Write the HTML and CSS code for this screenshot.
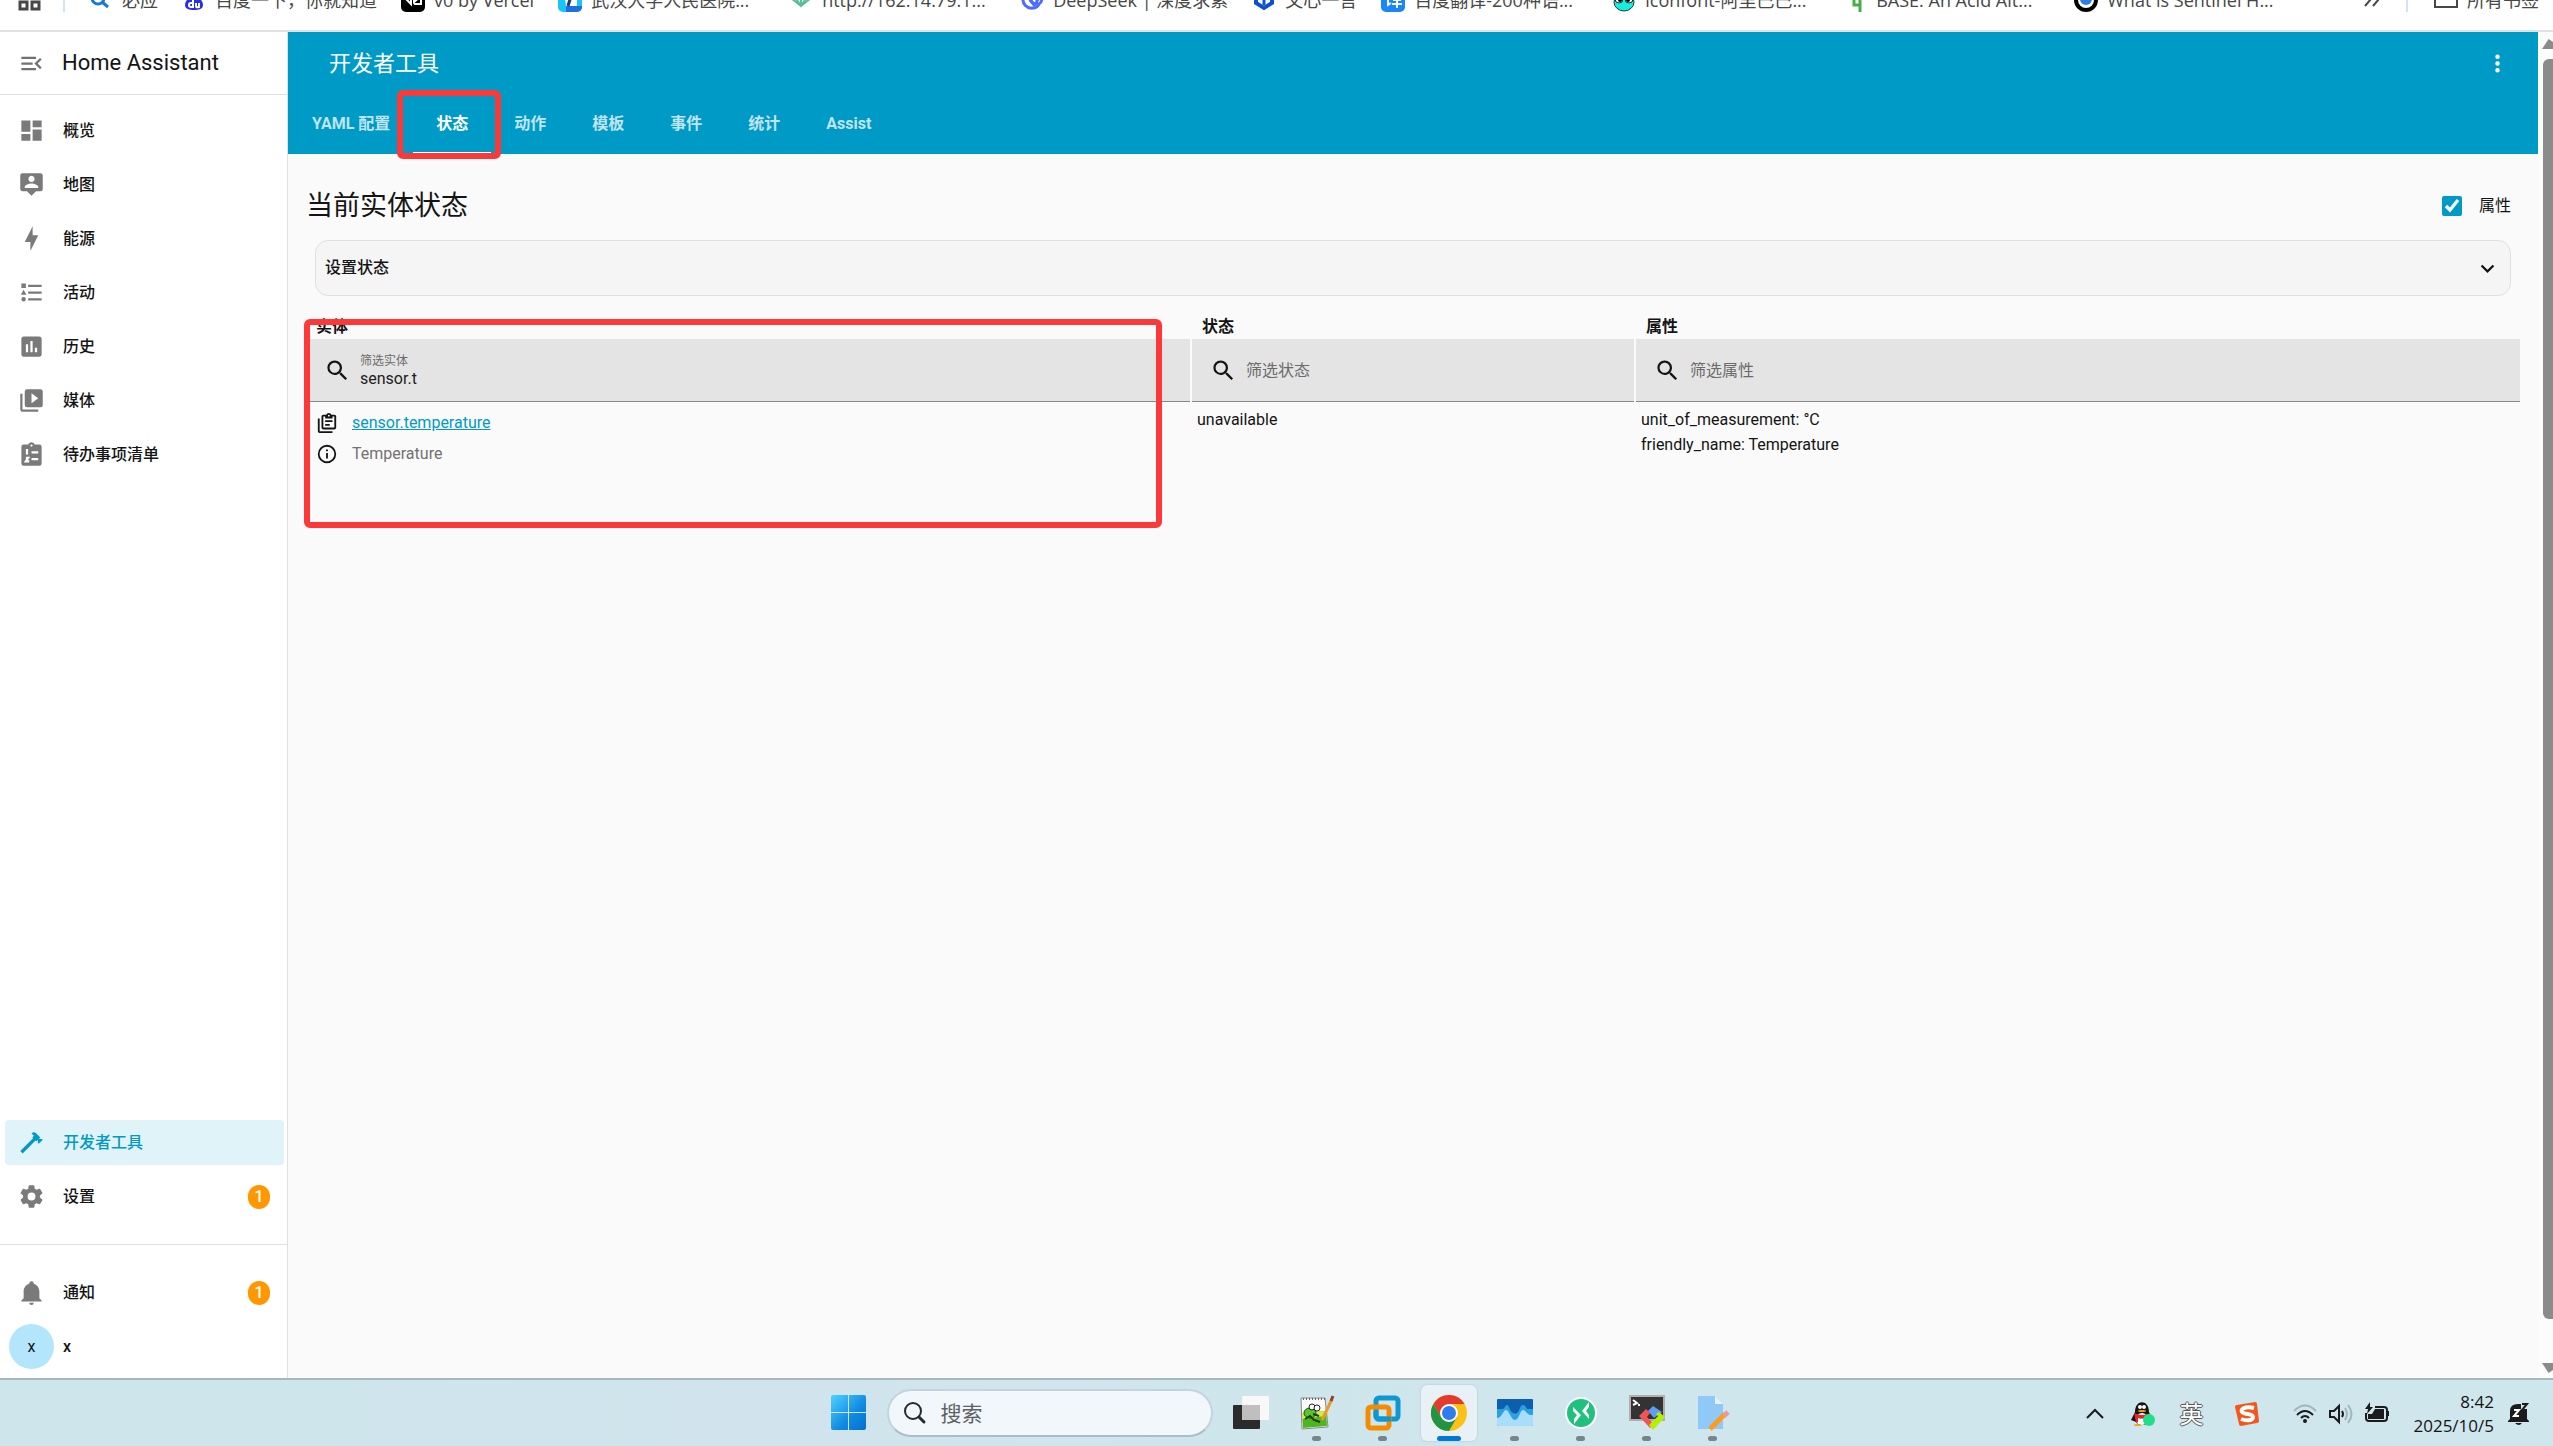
FILE: index.html
```html
<!DOCTYPE html>
<html lang="zh-CN">
<head>
  <meta charset="UTF-8">
  <meta name="viewport" content="width=device-width, initial-scale=1.0">
  <title>开发者工具 - Home Assistant</title>
  <link rel="stylesheet" href="styles.css">
</head>
<body>
  <!-- Bookmarks bar -->
  <nav class="bookmarks">
    <button class="bm-apps" aria-label="Apps">
      <svg viewBox="0 0 24 24"><path d="M2 2h7v7H2zM14 2h7v7h-7zM2 14h7v7H2zM14 14h7v7h-7z" fill="none" stroke="#474747" stroke-width="3"/></svg>
    </button>
    <span class="bm-sep"></span>
    <a class="bm" href="#"><svg viewBox="0 0 24 24"><circle cx="9" cy="10" r="6" fill="none" stroke="#1a78d0" stroke-width="3"/><path d="M13 14l6 5" stroke="#1a78d0" stroke-width="3"/></svg><span>必应</span></a>
    <a class="bm" href="#"><svg viewBox="0 0 24 24"><circle cx="12" cy="5" r="3" fill="#2932e1"/><path d="M12 7c4 0 9 6 9 10s-4 5-9 5-9-1-9-5 5-10 9-10z" fill="#2932e1"/><path d="M11 12v7H9a2 2 0 0 1 0-4h2M14 15v3q0 2 3 1v-4" fill="none" stroke="#fff" stroke-width="2"/></svg><span>百度一下，你就知道</span></a>
    <a class="bm" href="#"><svg viewBox="0 0 24 24"><rect width="24" height="24" rx="5"/><path d="M4 10l6 6V9M13 16h7V9h-7v5l6-5" fill="none" stroke="#fff" stroke-width="2"/></svg><span>v0 by Vercel</span></a>
    <a class="bm long" href="#"><svg viewBox="0 0 24 24"><rect width="24" height="24" rx="5" fill="#17c5f7"/><path d="M8 18h16v1a5 5 0 0 1-5 5H8z" fill="#1f6fe0"/><path d="M6 3h13v15H8z" fill="#fff"/><path d="M14 5l-4 13" stroke="#153b80" stroke-width="3"/></svg><span>武汉大学人民医院...</span></a>
    <a class="bm long" href="#"><svg viewBox="0 0 24 24"><path d="M2 10l10 8 10-8M6 9l6 9 6-9M12 6v12M2 10h20" fill="none" stroke="#58bd9b" stroke-width="2"/></svg><span>http://162.14.79.1...</span></a>
    <a class="bm" href="#"><svg viewBox="0 0 24 24"><path d="M3 9c-1 7 4 12 10 11 3 0 5-2 6-4 2-1 3-4 3-7l-5 3c0 4-2 5-5 2l-4-5" fill="none" stroke="#4d6bfe" stroke-width="3"/><path d="M10 12l5 6" stroke="#4d6bfe" stroke-width="3"/></svg><span>DeepSeek | 深度求索</span></a>
    <a class="bm" href="#"><svg viewBox="0 0 24 24"><path d="M4 6v9l8 5 8-5V6" fill="none" stroke="#0b51d0" stroke-width="4"/><path d="M12 7v10" stroke="#0b51d0" stroke-width="3"/></svg><span>文心一言</span></a>
    <a class="bm long" href="#"><svg viewBox="0 0 24 24"><rect width="24" height="24" rx="5" fill="#1787fb"/><path d="M5 8h2v9l3-2M12 12h8M11 16h10M16 8v12" fill="none" stroke="#fff" stroke-width="2"/></svg><span>百度翻译-200种语...</span></a>
    <a class="bm long" href="#"><svg viewBox="0 0 24 24"><ellipse cx="12" cy="14" rx="10" ry="9" fill="#10f0dc" stroke="#333"/><circle cx="7" cy="11" r="4" fill="#fff" stroke="#222"/><circle cx="17" cy="11" r="4" fill="#fff" stroke="#222"/><circle cx="8" cy="12" r="2"/><circle cx="16" cy="12" r="2"/></svg><span>iconfont-阿里巴巴...</span></a>
    <a class="bm long" href="#"><svg viewBox="0 0 24 24"><path d="M17 8v16M17 10h-6v7h6" fill="none" stroke="#48ae49" stroke-width="3"/></svg><span>BASE: An Acid Alt...</span></a>
    <a class="bm long" href="#"><svg viewBox="0 0 24 24"><circle cx="12" cy="12" r="12"/><circle cx="12" cy="12" r="8" fill="#fff"/><circle cx="12" cy="11" r="6" fill="#2f7de8"/></svg><span>What is Sentinel H...</span></a>
    <button class="bm-more" aria-label="More"><svg viewBox="0 0 24 24"><path d="M5 4l5 7-6 7M13 4l5 7-6 7" fill="none" stroke="#474747" stroke-width="2"/></svg></button>
    <span class="bm-sep"></span>
    <a class="bm all" href="#"><svg viewBox="0 0 24 24"><path d="M1 4h8l3 3h11v12H1z" fill="none" stroke="#474747" stroke-width="2"/></svg><span>所有书签</span></a>
  </nav>

  <div class="app">
    <!-- Sidebar -->
    <aside class="sidebar">
      <div class="side-head">
        <button class="icon-btn" aria-label="Menu"><svg class="icon" viewBox="0 0 24 24"><path d="M21,15.61L19.59,17L14.58,12L19.59,7L21,8.39L17.44,12L21,15.61M3,6H16V8H3V6M3,13V11H13V13H3M3,18V16H16V18H3Z"/></svg></button>
        <span class="side-title">Home Assistant</span>
      </div>
      <nav class="side-list">
        <a class="item" href="#"><svg class="icon" viewBox="0 0 24 24"><path d="M13,3V9H21V3M13,21H21V11H13M3,21H11V15H3M3,13H11V3H3V13Z"/></svg>概览</a>
        <a class="item" href="#"><svg class="icon" viewBox="0 0 24 24"><path d="M20,2H4A2,2 0 0,0 2,4V16A2,2 0 0,0 4,18H8L12,22L16,18H20A2,2 0 0,0 22,16V4A2,2 0 0,0 20,2M12,4.3C13.5,4.3 14.7,5.5 14.7,7C14.7,8.5 13.5,9.7 12,9.7C10.5,9.7 9.3,8.5 9.3,7C9.3,5.5 10.5,4.3 12,4.3M18,15H6V14.1C6,12.1 10,11 12,11C14,11 18,12.1 18,14.1V15Z"/></svg>地图</a>
        <a class="item" href="#"><svg class="icon" viewBox="0 0 24 24"><path d="M11 15H6L13 1V9H18L11 23V15Z"/></svg>能源</a>
        <a class="item" href="#"><svg class="icon" viewBox="0 0 24 24"><path d="M5,9.5L7.5,14H2.5L5,9.5M3,4H7V8H3V4M5,20A2,2 0 0,0 7,18A2,2 0 0,0 5,16A2,2 0 0,0 3,18A2,2 0 0,0 5,20M9,5V7H21V5H9M9,19H21V17H9V19M9,13H21V11H9V13Z"/></svg>活动</a>
        <a class="item" href="#"><svg class="icon" viewBox="0 0 24 24"><path d="M9 17H7V10H9V17M13 17H11V7H13V17M17 17H15V13H17V17M19 3H5C3.9 3 3 3.9 3 5V19C3 20.1 3.9 21 5 21H19C20.1 21 21 20.1 21 19V5C21 3.9 20.1 3 19 3Z"/></svg>历史</a>
        <a class="item" href="#"><svg class="icon" viewBox="0 0 24 24"><path d="M4,6H2V20A2,2 0 0,0 4,22H18V20H4V6M20,2H8A2,2 0 0,0 6,4V16A2,2 0 0,0 8,18H20A2,2 0 0,0 22,16V4A2,2 0 0,0 20,2M12,14.5V5.5L18,10L12,14.5Z"/></svg>媒体</a>
        <a class="item" href="#"><svg class="icon" viewBox="0 0 24 24"><path d="M19,3H14.82C14.4,1.84 13.3,1 12,1C10.7,1 9.6,1.84 9.18,3H5A2,2 0 0,0 3,5V20A2,2 0 0,0 5,22H19A2,2 0 0,0 21,20V5A2,2 0 0,0 19,3M12,3A1,1 0 0,1 13,4A1,1 0 0,1 12,5A1,1 0 0,1 11,4A1,1 0 0,1 12,3"/><path d="M7 8h1v4M7 15h2l-2 3h3M12 10h6M12 16h6" class="cut"/></svg>待办事项清单</a>
        <span class="spacer"></span>
        <a class="item selected" href="#"><svg class="icon" viewBox="0 0 24 24"><path d="M2 19.63L13.43 8.2L12.72 7.5L14.14 6.07L12 3.89C13.2 2.7 15.09 2.7 16.27 3.89L19.87 7.5L18.45 8.91H21.29L22 9.62L18.45 13.21L17.74 12.5V9.62L16.27 11.04L15.56 10.33L4.13 21.76L2 19.63Z"/></svg>开发者工具</a>
        <a class="item" href="#"><svg class="icon" viewBox="0 0 24 24"><path d="M12,15.5A3.5,3.5 0 0,1 8.5,12A3.5,3.5 0 0,1 12,8.5A3.5,3.5 0 0,1 15.5,12A3.5,3.5 0 0,1 12,15.5M19.43,12.97C19.47,12.65 19.5,12.33 19.5,12C19.5,11.67 19.47,11.34 19.43,11L21.54,9.37C21.73,9.22 21.78,8.95 21.66,8.73L19.66,5.27C19.54,5.05 19.27,4.96 19.05,5.05L16.56,6.05C16.04,5.66 15.5,5.32 14.87,5.07L14.5,2.42C14.46,2.18 14.25,2 14,2H10C9.75,2 9.54,2.18 9.5,2.42L9.13,5.07C8.5,5.32 7.96,5.66 7.44,6.05L4.95,5.05C4.73,4.96 4.46,5.05 4.34,5.27L2.34,8.73C2.21,8.95 2.27,9.22 2.46,9.37L4.57,11C4.53,11.34 4.5,11.67 4.5,12C4.5,12.33 4.53,12.65 4.57,12.97L2.46,14.63C2.27,14.78 2.21,15.05 2.34,15.27L4.34,18.73C4.46,18.95 4.73,19.03 4.95,18.95L7.44,17.94C7.96,18.34 8.5,18.68 9.13,18.93L9.5,21.58C9.54,21.82 9.75,22 10,22H14C14.25,22 14.46,21.82 14.5,21.58L14.87,18.93C15.5,18.67 16.04,18.34 16.56,17.94L19.05,18.95C19.27,19.03 19.54,18.95 19.66,18.73L21.66,15.27C21.78,15.05 21.73,14.78 21.54,14.63L19.43,12.97Z"/></svg>设置<span class="badge">1</span></a>
      </nav>
      <nav class="side-foot">
        <a class="item" href="#"><svg class="icon" viewBox="0 0 24 24"><path d="M21,19V20H3V19L5,17V11C5,7.9 7.03,5.17 10,4.29C10,4.19 10,4.1 10,4A2,2 0 0,1 12,2A2,2 0 0,1 14,4C14,4.1 14,4.19 14,4.29C16.97,5.17 19,7.9 19,11V17L21,19M14,21A2,2 0 0,1 12,23A2,2 0 0,1 10,21"/></svg>通知<span class="badge">1</span></a>
        <a class="item user" href="#"><span class="avatar">x</span>x</a>
      </nav>
    </aside>

    <!-- Developer tools -->
    <div class="panel">
      <header class="toolbar">
        <div class="toolbar-top">
          <span class="toolbar-title">开发者工具</span>
          <button class="icon-btn" aria-label="More"><svg class="icon" viewBox="0 0 24 24"><path d="M12,16A2,2 0 0,1 14,18A2,2 0 0,1 12,20A2,2 0 0,1 10,18A2,2 0 0,1 12,16M12,10A2,2 0 0,1 14,12A2,2 0 0,1 12,14A2,2 0 0,1 10,12A2,2 0 0,1 12,10M12,4A2,2 0 0,1 14,6A2,2 0 0,1 12,8A2,2 0 0,1 10,6A2,2 0 0,1 12,4Z"/></svg></button>
        </div>
        <nav class="tabs">
          <a class="tab" href="#">YAML 配置</a>
          <a class="tab active" href="#">状态</a>
          <a class="tab" href="#">动作</a>
          <a class="tab" href="#">模板</a>
          <a class="tab" href="#">事件</a>
          <a class="tab" href="#">统计</a>
          <a class="tab" href="#">Assist</a>
        </nav>
      </header>

      <main class="content">
        <div class="heading">
          <h1>当前实体状态</h1>
          <label class="attr-toggle"><input type="checkbox" checked>属性</label>
        </div>

        <button class="expansion">设置状态<svg class="icon" viewBox="0 0 24 24"><path d="M7.41,8.58L12,13.17L16.59,8.58L18,10L12,16L6,10L7.41,8.58Z"/></svg></button>

        <div class="table-wrap">
          <table class="states">
            <colgroup><col class="wide"><col class="narrow"><col class="wide"></colgroup>
            <thead>
              <tr><th>实体</th><th>状态</th><th>属性</th></tr>
              <tr class="filters">
                <td><div class="filter"><svg class="icon" viewBox="0 0 24 24"><path d="M9.5,3A6.5,6.5 0 0,1 16,9.5C16,11.11 15.41,12.59 14.44,13.73L14.71,14H15.5L20.5,19L19,20.5L14,15.5V14.71L13.73,14.44C12.59,15.41 11.11,16 9.5,16A6.5,6.5 0 0,1 3,9.5A6.5,6.5 0 0,1 9.5,3M9.5,5C7,5 5,7 5,9.5C5,12 7,14 9.5,14C12,14 14,12 14,9.5C14,7 12,5 9.5,5Z"/></svg><div class="field"><label for="f-entity">筛选实体</label><input id="f-entity" type="text" value="sensor.t"></div></div></td>
                <td><div class="filter"><svg class="icon" viewBox="0 0 24 24"><path d="M9.5,3A6.5,6.5 0 0,1 16,9.5C16,11.11 15.41,12.59 14.44,13.73L14.71,14H15.5L20.5,19L19,20.5L14,15.5V14.71L13.73,14.44C12.59,15.41 11.11,16 9.5,16A6.5,6.5 0 0,1 3,9.5A6.5,6.5 0 0,1 9.5,3M9.5,5C7,5 5,7 5,9.5C5,12 7,14 9.5,14C12,14 14,12 14,9.5C14,7 12,5 9.5,5Z"/></svg><div class="field"><input type="text" placeholder="筛选状态" aria-label="筛选状态"></div></div></td>
                <td><div class="filter"><svg class="icon" viewBox="0 0 24 24"><path d="M9.5,3A6.5,6.5 0 0,1 16,9.5C16,11.11 15.41,12.59 14.44,13.73L14.71,14H15.5L20.5,19L19,20.5L14,15.5V14.71L13.73,14.44C12.59,15.41 11.11,16 9.5,16A6.5,6.5 0 0,1 3,9.5A6.5,6.5 0 0,1 9.5,3M9.5,5C7,5 5,7 5,9.5C5,12 7,14 9.5,14C12,14 14,12 14,9.5C14,7 12,5 9.5,5Z"/></svg><div class="field"><input type="text" placeholder="筛选属性" aria-label="筛选属性"></div></div></td>
              </tr>
            </thead>
            <tbody>
              <tr>
                <td>
                  <div class="entity"><svg class="icon" viewBox="0 0 24 24"><path d="M4,7V21H18V23H4A2,2 0 0,1 2,21V7H4M20,3C21.1,3 22,3.9 22,5V17C22,18.1 21.1,19 20,19H8C6.9,19 6,18.1 6,17V5C6,3.9 6.9,3 8,3H11.18C11.6,1.84 12.7,1 14,1C15.3,1 16.4,1.84 16.82,3H20M14,3A1,1 0 0,0 13,4A1,1 0 0,0 14,5A1,1 0 0,0 15,4A1,1 0 0,0 14,3M10,7V5H8V17H20V5H18V7H10M10,9H18V11H10V9M10,13H15V15H10V13Z"/></svg><a href="#">sensor.temperature</a></div>
                  <div class="entity"><svg class="icon" viewBox="0 0 24 24"><path d="M11,9H13V7H11M12,20C7.59,20 4,16.41 4,12C4,7.59 7.59,4 12,4C16.41,4 20,7.59 20,12C20,16.41 16.41,20 12,20M12,2A10,10 0 0,0 2,12A10,10 0 0,0 12,22A10,10 0 0,0 22,12A10,10 0 0,0 12,2M11,17H13V11H11V17Z"/></svg><span class="secondary">Temperature</span></div>
                </td>
                <td>unavailable</td>
                <td>unit_of_measurement: °C<br>friendly_name: Temperature</td>
              </tr>
            </tbody>
          </table>
          <span class="mark mark-table"></span>
        </div>
      </main>
    </div>

    <div class="scrollbar"><span class="arrow up"></span><span class="thumb"></span><span class="arrow down"></span></div>
  </div>

  <!-- Taskbar -->
  <footer class="taskbar">
    <div class="dock">
      <button class="tile" aria-label="Start">
        <svg viewBox="0 0 36 36"><defs><linearGradient id="win" x1="0" y1="0" x2="1" y2="1"><stop offset="0" stop-color="#4fd3ff"/><stop offset=".6" stop-color="#1089e0"/><stop offset="1" stop-color="#0072d0"/></linearGradient></defs><path d="M2 0h15v17H0V2a2 2 0 0 1 2-2zM18 0h15a2 2 0 0 1 2 2v15H18zM0 18h17v17H2a2 2 0 0 1-2-2zM18 18h17v15a2 2 0 0 1-2 2H18z" fill="url(#win)"/></svg>
      </button>
      <label class="search">
        <svg viewBox="0 0 24 24"><circle cx="10" cy="10" r="8" fill="none" stroke="#2a2a2a" stroke-width="2"/><path d="M16 16l5 5" stroke="#2a2a2a" stroke-width="3" stroke-linecap="round"/></svg>
        <input type="text" placeholder="搜索" aria-label="搜索">
      </label>
      <button class="tile" aria-label="Task view">
        <svg viewBox="0 0 36 36"><rect x="0" y="10" width="27" height="24" rx="1" fill="#2b2b2b"/><rect x="9" y="1" width="27" height="24" rx="1" fill="#f8f8f8"/><path d="M9 10h18v15H9z" fill="#bfbfbf"/></svg>
      </button>
      <button class="tile run" aria-label="Notepad++">
        <svg viewBox="0 0 36 36"><path d="M2 3h24l3 29-26 2z" fill="#fafafa" stroke="#888"/><path d="M3 18l24-2 1 15-24 2z" fill="#4fb51e"/><path d="M3 18l24-2v5L3 24z" fill="#d7e84a"/><path d="M4 4h22" stroke="#666" stroke-width="2" stroke-dasharray="1 2"/><ellipse cx="11" cy="18" rx="6" ry="5" fill="#56c72c" stroke="#1d4d12"/><path d="M6 24l5-3 4 4 6 2M14 19l6 2" fill="none" stroke="#1d3d12" stroke-width="2"/><circle cx="13" cy="12" r="3" fill="#fff" stroke="#222"/><circle cx="18" cy="13" r="3" fill="#fff" stroke="#222"/><path d="M33 4L23 25" stroke="#e89c24" stroke-width="3"/><path d="M34 1l-2 5" stroke="#9c3b2f" stroke-width="3"/></svg>
      </button>
      <button class="tile run" aria-label="VMware">
        <svg viewBox="0 0 36 36" fill="none" stroke-width="5"><rect x="11" y="3" width="22" height="21" rx="3" stroke="#0f97d4"/><rect x="3" y="12" width="21" height="21" rx="3" stroke="#f58b00"/><path d="M11 16v5a3 3 0 0 0 3 3h12" stroke="#0f97d4"/></svg>
      </button>
      <button class="tile run current" aria-label="Chrome">
        <svg viewBox="0 0 36 36"><circle cx="18" cy="18" r="18" fill="#fbc116"/><path d="M2.4 9A18 18 0 0 1 33.6 9H18L10 22z" fill="#e33b2e"/><path d="M2.4 9A18 18 0 0 0 18 36L25.8 22.5 10.2 22.5z" fill="#229342"/><circle cx="18" cy="18" r="9" fill="#fff"/><circle cx="18" cy="18" r="7" fill="#2f7cf0"/></svg>
      </button>
      <button class="tile run" aria-label="Monitor">
        <svg viewBox="0 0 36 36"><rect y="4" width="36" height="27" rx="1" fill="#0d5fae"/><path d="M0 14h5c3 0 3-4 5-4s3 7 6 8 3 1 5-1 2-7 5-7 3 4 5 4h5v16H0z" fill="#2ba1e2"/><path d="M0 23c5 0 6-8 9-8s5 10 9 10 5-10 8-10 4 6 10 5v10a1 1 0 0 1-1 1H1a1 1 0 0 1-1-1z" fill="#a9defb"/></svg>
      </button>
      <button class="tile run" aria-label="Remote">
        <svg viewBox="0 0 36 36"><circle cx="18" cy="18" r="15" fill="#20c17d" stroke="#fff" stroke-width="2"/><path d="M10 12l8 8-7 9v-5l3-4-4-4zM26 7l-7 9 7 8v-4l-3-4 3-4z" fill="#fff"/></svg>
      </button>
      <button class="tile run" aria-label="MobaXterm">
        <svg viewBox="0 0 36 36"><rect x="1" y="1" width="34" height="24" fill="#333" stroke="#b4acae" stroke-width="2"/><path d="M4 5l4 3-4 2M9 10h2" fill="none" stroke="#fff" stroke-width="2"/><path d="M10 21l7-7 4 4-3 4 7 7-4 4z" fill="#f05454"/><path d="M19 16l5-5 9 6-8 6z" fill="#5f9df5"/><path d="M20 30l9-9-2-2 3-2 6 5-12 13z" fill="#b5f000"/></svg>
      </button>
      <button class="tile run" aria-label="Notepad">
        <svg viewBox="0 0 36 36"><path d="M3 1h17l8 8v25H3z" fill="#8fc9f7"/><path d="M20 1v8h8z" fill="#e4f3fd"/><path d="M30 19L15 34" stroke="#ff9a1a" stroke-width="5"/><path d="M33 17l-4 4" stroke="#e79aa0" stroke-width="5"/></svg>
      </button>
    </div>

    <div class="tray">
      <button class="slot" aria-label="Show hidden icons"><svg viewBox="0 0 24 24"><path d="M4 16l8-8 8 8" fill="none" stroke="#1b1b1b" stroke-width="2"/></svg></button>
      <button class="slot" aria-label="QQ"><svg viewBox="0 0 24 24"><ellipse cx="7" cy="23" rx="4" ry="1" fill="#f7a700"/><path d="M4 10C4-3 18-3 18 10l4 9-3 1c-2 4-12 4-14 0l-5-2z" fill="#151515"/><ellipse cx="11" cy="17" rx="6" ry="6" fill="#fff"/><path d="M3 11q8 4 16 0v4q-8 3-12 1v4H5z" fill="#e8252d"/><circle cx="9" cy="5" r="2" fill="#fff"/><circle cx="13" cy="5" r="2" fill="#fff"/><ellipse cx="11" cy="9" rx="4" ry="1" fill="#f7a700"/><circle cx="18" cy="18" r="6" fill="#1fe08a"/></svg></button>
      <button class="slot ime">英</button>
      <button class="slot sogou" aria-label="Sogou"><svg viewBox="0 0 24 24"><path d="M2 3L20 0q2 0 2 2l2 17q0 2-2 2L6 24q-2 0-2-2L0 5q0-2 2-2z" fill="#f4571b"/><path d="M19 6C10 4 5 7 7 10s11 1 11 5-7 4-12 2" fill="none" stroke="#fff" stroke-width="4"/></svg></button>
      <button class="status" aria-label="Network and sound">
        <svg viewBox="0 0 24 24" fill="none" stroke="#1b1b1b" stroke-width="2"><path d="M1 9q11-11 22 0" stroke="#a3b6bd"/><path d="M4 13q8-8 16 0M8 16q4-4 8 0"/><circle cx="12" cy="19" r="1"/></svg>
        <svg viewBox="0 0 24 24" fill="none" stroke="#1b1b1b" stroke-width="2"><path d="M1 9h4l5-5v16l-5-5H1zM13 9q2 3 0 6"/><path d="M16 6q4 6 0 12M19 3q7 9 0 18" stroke="#a3b6bd"/></svg>
        <svg viewBox="0 0 24 24"><path d="M10 5h9a3 3 0 0 1 3 3v8a3 3 0 0 1-3 3H4a3 3 0 0 1-3-3v-5" fill="none" stroke="#1b1b1b" stroke-width="2"/><path d="M10 7h9v10H3v-5h4zM5 0L0 7h3L2 12l6-7H5zM22 9h2v5h-2z" fill="#1b1b1b"/></svg>
      </button>
      <button class="clock"><span>8:42</span><span>2025/10/5</span></button>
      <button class="bell" aria-label="Notifications"><svg viewBox="0 0 24 24"><path d="M3 17V9q0-7 8-7h3v6h6v9l2 2v1H1v-1zM8 21h7q-3 4-7 0z" fill="#1b1b1b"/><path d="M7 8h5l-5 6h5" fill="none" stroke="#fff" stroke-width="2"/><path d="M15 2h5l-5 6h5" fill="none" stroke="#1b1b1b" stroke-width="2"/></svg></button>
    </div>
  </footer>
</body>
</html>
```
FILE: styles.css
```css
* {
  box-sizing: border-box;
}

body {
  display: flex;
  flex-direction: column;
  height: 100vh;
  margin: 0;
  overflow: hidden;
  font-family: Roboto, "Noto Sans CJK SC", sans-serif;
  font-size: 16px;
  line-height: 20px;
  color: #141414;
  background: #fafafa;
}

button {
  padding: 0;
  border: 0;
  background: none;
  font: inherit;
  color: inherit;
}

a {
  color: inherit;
  text-decoration: none;
}

svg {
  flex: none;
}

/* Bookmarks bar */
.bookmarks {
  display: flex;
  flex: none;
  align-items: flex-start;
  height: 32px;
  padding: 0 14px 0 18px;
  overflow: hidden;
  border-bottom: 2px solid #e1e1e1;
  background: #fff;
  font-family: "Open Sans", "Noto Sans CJK SC", sans-serif;
  font-size: 18px;
  line-height: 24px;
  color: #474747;
}

.bookmarks > * {
  height: 24px;
  margin-top: -12px;
}

.bookmarks svg {
  width: 24px;
  height: 24px;
}

.bm-sep {
  flex: none;
  width: 2px;
  margin-left: 21px;
  background: #d3e3fd;
}

.bm {
  display: flex;
  flex: none;
  gap: 9px;
  margin-left: 24px;
  white-space: nowrap;
}

.bm.long span {
  width: 174px;
}

.bm.all {
  margin-left: 26px;
}

.bm-more {
  margin-left: auto;
}

/* Sidebar */
.app {
  display: flex;
  flex: 1;
  min-height: 0;
}

.icon {
  width: 27px;
  height: 27px;
  fill: currentColor;
}

.icon-btn {
  display: flex;
}

.sidebar {
  display: flex;
  flex: none;
  flex-direction: column;
  width: 288px;
  border-right: 1px solid #e0e0e0;
  background: #fff;
}

.side-head {
  display: flex;
  align-items: center;
  gap: 17px;
  height: 63px;
  padding-left: 18px;
  border-bottom: 1px solid #e0e0e0;
}

.side-head .icon-btn {
  color: #727272;
}

.side-title {
  font-size: 22px;
  line-height: 24px;
}

.side-list,
.side-foot {
  display: flex;
  flex-direction: column;
  gap: 9px;
  padding: 13px 3px 0 5px;
}

.side-list {
  flex: 1;
  padding-bottom: 25px;
}

.side-foot {
  padding-top: 25px;
  padding-bottom: 9px;
  border-top: 1px solid #e0e0e0;
}

.spacer {
  flex: 1;
}

.item {
  display: flex;
  align-items: center;
  gap: 18px;
  height: 45px;
  padding: 0 14px 0 13px;
  border-radius: 4px;
  font-weight: 500;
}

.item .icon {
  color: #7a7a7a;
}

.item .cut {
  fill: none;
  stroke: #fff;
  stroke-width: 2;
}

.item.selected {
  background: #e0f3f8;
  color: #009ac7;
}

.item.selected .icon {
  color: #009ac7;
}

.item.user {
  gap: 9px;
  padding-left: 4px;
}

.badge {
  width: 22px;
  margin-left: auto;
  border-radius: 12px;
  background: #ff9800;
  color: #fff;
  line-height: 24px;
  text-align: center;
}

.avatar {
  width: 45px;
  border-radius: 50%;
  background: #b3e5fc;
  font-weight: 400;
  line-height: 45px;
  text-align: center;
}

/* Toolbar */
.panel {
  flex: 1;
  min-width: 0;
}

.toolbar {
  background: #009ac7;
  color: #fff;
}

.toolbar-top {
  display: flex;
  align-items: center;
  justify-content: space-between;
  height: 63px;
  padding: 0 27px 0 41px;
}

.toolbar-title {
  font-size: 22px;
}

.tabs {
  display: flex;
  height: 59px;
  padding-left: 1px;
}

.tab {
  position: relative;
  padding: 0 23px;
  border-bottom: 2px solid transparent;
  color: rgba(255, 255, 255, 0.75);
  font-weight: 700;
  line-height: 58px;
}

.tab.active {
  border-bottom-color: #fff;
  color: #fff;
}

/* Red frames drawn over the page */
.mark {
  position: absolute;
  border: 6px solid #fd3838;
  border-radius: 6px;
  pointer-events: none;
}

.tab.active::after {
  content: "";
  position: absolute;
  top: -5px;
  right: -10px;
  bottom: -7px;
  left: -16px;
  border: 6px solid #fd3838;
  border-radius: 6px;
}

.mark-table {
  top: 4px;
  left: -2px;
  width: calc(40% - 28px);
  height: 209px;
}

/* Content */
.content {
  padding: 27px 18px;
}

.heading {
  display: flex;
  align-items: center;
  justify-content: space-between;
  height: 50px;
  padding-right: 9px;
}

h1 {
  margin: 0;
  font-size: 27px;
  font-weight: 400;
  line-height: 32px;
}

.attr-toggle {
  display: flex;
  align-items: center;
  gap: 17px;
}

.attr-toggle input {
  width: 20px;
  height: 20px;
  margin: 0;
  accent-color: #009ac7;
}

.expansion {
  display: flex;
  align-items: center;
  justify-content: space-between;
  width: calc(100% - 18px);
  height: 56px;
  margin: 9px 9px 19px;
  padding: 0 9px;
  border: 1px solid #e0e0e0;
  border-radius: 13px;
  background: #f5f5f5;
  font-weight: 500;
}

.table-wrap {
  position: relative;
}

.states {
  width: calc(100% + 4px);
  margin: 0 -2px;
  border-spacing: 2px 0;
  table-layout: fixed;
}

.wide {
  width: 40%;
}

.narrow {
  width: 20%;
}

.states th {
  height: 24px;
  padding: 0 10px;
  line-height: 24px;
  text-align: left;
}

.states td {
  padding: 5px;
  line-height: 25px;
  vertical-align: top;
}

.states .filters td {
  padding: 0;
}

.filter {
  display: flex;
  align-items: center;
  gap: 9px;
  height: 63px;
  padding: 0 18px;
  border-bottom: 1px solid #868686;
  background: #e4e4e4;
}

.field {
  display: flex;
  flex: 1;
  flex-direction: column;
  padding-top: 2px;
}

.field label {
  color: #6b6b6b;
  font-size: 12px;
  line-height: 16px;
}

.field input {
  width: 100%;
  padding: 0;
  border: 0;
  background: none;
  font: inherit;
  line-height: 20px;
  color: #212121;
}

.field input::placeholder {
  color: #6b6b6b;
}

.entity {
  display: flex;
  align-items: center;
  gap: 14px;
  height: 31px;
  padding-left: 5px;
}

.entity .icon {
  width: 22px;
  height: 22px;
}

.entity a {
  color: #009ac7;
  text-decoration: underline;
}

.secondary {
  color: #727272;
}

/* Scrollbar */
.scrollbar {
  display: flex;
  flex: none;
  flex-direction: column;
  align-items: flex-end;
  width: 15px;
  padding: 7px 0 5px;
  overflow: hidden;
  background: #fcfcfc;
}

.thumb {
  flex: 1;
  width: 10px;
  margin: 10px 0 44px;
  border-radius: 6px 0 0 6px;
  background: #8b8b8b;
}

.arrow {
  width: 11px;
  height: 10px;
  background: #8b8b8b;
}

.arrow.up {
  clip-path: polygon(0 100%, 60% 0, 100% 30%, 100% 100%);
}

.arrow.down {
  clip-path: polygon(0 0, 60% 100%, 100% 70%, 100% 0);
}

/* Taskbar */
.taskbar {
  display: grid;
  grid-template-columns: 1fr auto 1fr;
  flex: none;
  height: 68px;
  padding-left: 8px;
  border-top: 2px solid #a6b7bd;
  background: linear-gradient(90deg, #cde5eb, #d1e4ed 30%, #cee6ec 60%, #cfe6ec);
  font-family: "Open Sans", "Noto Sans CJK SC", sans-serif;
}

.dock {
  display: flex;
  grid-column: 2;
  align-items: center;
  gap: 10px;
}

.tile {
  position: relative;
  display: flex;
  align-items: center;
  justify-content: center;
  width: 56px;
  height: 56px;
  border-radius: 6px;
}

.tile svg {
  width: 36px;
  height: 36px;
}

.tile.current {
  background: #e8f2f6;
  box-shadow: 0 0 2px #a9bcc4;
}

.tile.run::after {
  content: "";
  position: absolute;
  bottom: 0;
  width: 9px;
  height: 5px;
  border-radius: 3px;
  background: #788589;
}

.tile.current::after {
  width: 24px;
  background: #0078d7;
}

.search {
  display: flex;
  align-items: center;
  gap: 14px;
  width: 326px;
  height: 48px;
  padding: 0 14px;
  border: 2px solid #c1d5dc;
  border-bottom-color: #a9bec6;
  border-radius: 24px;
  background: #f1f7fa;
}

.search svg {
  width: 24px;
  height: 24px;
}

.search input {
  flex: 1;
  min-width: 0;
  padding: 0;
  border: 0;
  background: none;
  font: inherit;
  font-size: 21px;
}

.search input::placeholder {
  color: #5c6265;
}

.tray {
  display: flex;
  align-items: center;
  justify-content: flex-end;
  padding: 2px 22px 0 0;
}

.tray svg {
  display: block;
  width: 24px;
  height: 24px;
}

.slot {
  display: flex;
  justify-content: center;
  width: 48px;
}

.slot.sogou {
  width: 64px;
}

.ime {
  color: #fff;
  font-size: 24px;
  line-height: 24px;
  text-shadow: 1px 0 #555, -1px 0 #555, 0 1px #555, 0 -1px #555;
}

.status {
  display: flex;
  gap: 12px;
  margin: 0 24px 0 14px;
}

.clock {
  display: flex;
  flex-direction: column;
  align-items: flex-end;
  margin-right: 13px;
  font-size: 17px;
  line-height: 24px;
}
```
